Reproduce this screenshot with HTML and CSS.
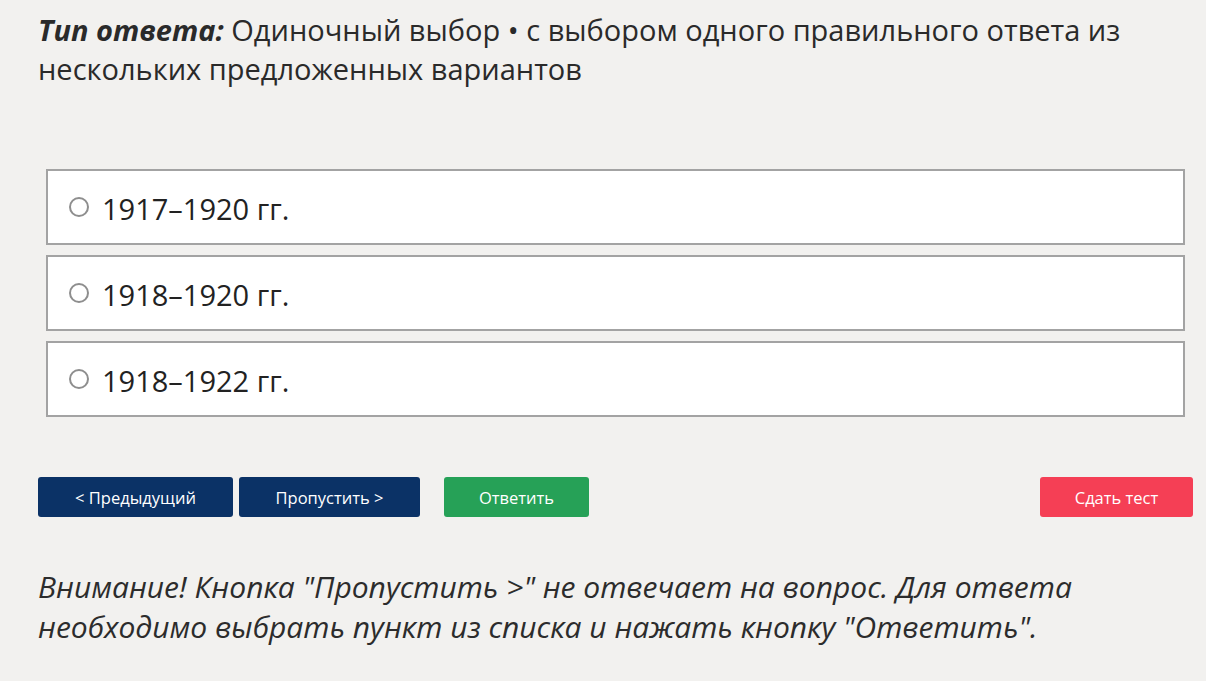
FILE: index.html
```html
<!DOCTYPE html>
<html lang="ru">
<head>
<meta charset="utf-8">
<title>Тест</title>
<link rel="stylesheet" href="styles.css">
</head>
<body>
<div class="page">
  <p class="type"><b class="type-label">Тип ответа:</b> Одиночный выбор • с выбором одного правильного ответа из нескольких предложенных вариантов</p>
  <div class="options">
    <label class="option"><span class="radio"></span><span class="opt-text">1917–1920 гг.</span></label>
    <label class="option"><span class="radio"></span><span class="opt-text">1918–1920 гг.</span></label>
    <label class="option"><span class="radio"></span><span class="opt-text">1918–1922 гг.</span></label>
  </div>
  <div class="buttons">
    <button class="btn btn-navy btn-prev">&lt; Предыдущий</button>
    <button class="btn btn-navy btn-skip">Пропустить &gt;</button>
    <button class="btn btn-green btn-answer">Ответить</button>
    <button class="btn btn-red btn-submit">Сдать тест</button>
  </div>
  <p class="note">Внимание! Кнопка "Пропустить &gt;" не отвечает на вопрос. Для ответа необходимо выбрать пункт из списка и нажать кнопку "Ответить".</p>
</div>
</body>
</html>
```
FILE: styles.css
```css
html, body {
  margin: 0;
  padding: 0;
  background: #f2f1ef;
}
body {
  font-family: "Open Sans", "Noto Sans", sans-serif;
  color: #2a2a2a;
}
.page {
  padding: 10px 13px 0 38px;
}
.type {
  margin: 0;
  font-size: 29px;
  line-height: 39px;
  max-width: 1120px;
}
.type-label {
  font-style: italic;
  font-weight: 700;
}
.options {
  margin: 81px 8px 0 8px;
  display: flex;
  flex-direction: column;
  gap: 10px;
}
.option {
  display: flex;
  align-items: center;
  height: 76px;
  box-sizing: border-box;
  background: #fff;
  border: 2px solid #a3a3a3;
  padding-left: 21px;
}
.radio {
  width: 16px;
  height: 16px;
  border: 2px solid #8e8e8e;
  border-radius: 50%;
  box-sizing: content-box;
  margin-right: 13px;
}
.opt-text {
  font-size: 29px;
  color: #222;
  padding-top: 2px;
}
.buttons {
  display: flex;
  margin-top: 60px;
  height: 40px;
}
.btn {
  border: none;
  border-radius: 3px;
  color: #fff;
  font-family: "Open Sans", "Noto Sans", sans-serif;
  font-size: 16.5px;
  height: 40px;
  padding: 0;
}
.btn-navy { background: #0b3266; }
.btn-green { background: #26a157; }
.btn-red { background: #f53f55; }
.btn-prev { width: 195px; }
.btn-skip { width: 181px; margin-left: 6px; }
.btn-answer { width: 145px; margin-left: 24px; }
.btn-submit { width: 153px; margin-left: auto; }
.note {
  margin: 50px 0 0;
  font-size: 30px;
  line-height: 40px;
  font-style: italic;
  color: #2c2c2c;
  max-width: 1100px;
}
```
